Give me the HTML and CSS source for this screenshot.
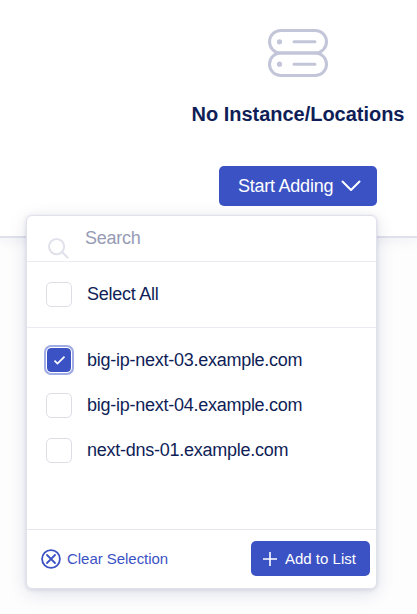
FILE: index.html
```html
<!DOCTYPE html>
<html lang="en">
<head>
<meta charset="utf-8">
<title>Instance/Locations</title>
<link rel="stylesheet" href="styles.css">
</head>
<body>
<main class="empty-card">
  <div class="empty-content">
    <svg class="server-icon" width="62" height="50" viewBox="0 0 62 50" fill="none" stroke="#c3c6d9" stroke-width="3" stroke-linecap="round">
      <rect x="2.500" y="2.500" width="57" height="22.500" rx="11.250"/>
      <rect x="2.500" y="25" width="57" height="22.500" rx="11.250"/>
      <path d="M27 13.800h21M27 36.200h21"/>
      <circle cx="12.500" cy="13.800" r="2.600" fill="#c3c6d9" stroke="none"/>
      <circle cx="12.500" cy="36.200" r="2.600" fill="#c3c6d9" stroke="none"/>
    </svg>
    <h1 class="title"><span>No Instance/Locations</span></h1>
  </div>
  <div class="dropdown">
    <button class="button start"><span>Start Adding</span>
      <svg width="20" height="12" viewBox="0 0 20 12" fill="none" stroke="#fff" stroke-width="2" stroke-linecap="round" stroke-linejoin="round"><path d="M1.500 1.500 10 10l8.500-8.500"/></svg>
    </button>
    <section class="menu">
      <label class="search">
        <svg width="21" height="21" viewBox="0 0 21 21" fill="none" stroke="#e0e1ea" stroke-width="2"><circle cx="8.600" cy="8.600" r="7.600"/><path d="m14 14 6.200 6.200"/></svg>
        <span>Search</span>
      </label>
      <div class="select-all row"><i class="box"></i><span class="all-label">Select All</span></div>
      <div class="options">
        <div class="row"><i class="box checked"><svg width="13" height="11" viewBox="0 0 13 11" fill="none" stroke="#fff" stroke-width="1.700"><path d="m1.500 5.600 3 3 7-7"/></svg></i><span class="host">big-ip-next-03.example.com</span></div>
        <div class="row"><i class="box"></i><span class="host">big-ip-next-04.example.com</span></div>
        <div class="row"><i class="box"></i><span class="host">next-dns-01.example.com</span></div>
      </div>
      <footer class="actions">
        <button class="clear">
          <svg width="20" height="20" viewBox="0 0 20 20" fill="none" stroke="#3b52c4" stroke-width="1.800" stroke-linecap="round"><circle cx="10" cy="10" r="8.900"/><path d="m6 6 8 8M14 6l-8 8"/></svg>
          <span>Clear Selection</span>
        </button>
        <button class="button add">
          <svg width="14" height="14" viewBox="0 0 14 14" fill="none" stroke="#fff" stroke-width="1.600"><path d="M7 0v14M0 7h14"/></svg>
          <span>Add to List</span>
        </button>
      </footer>
    </section>
  </div>
</main>
</body>
</html>
```
FILE: styles.css
```css
* { box-sizing: border-box; }
body {
  margin: 0;
  height: 614px;
  overflow: hidden;
  background: #fdfdfe;
  color: #0f1e57;
  font-family: "Liberation Sans", Arial, sans-serif;
  white-space: nowrap;
}
button { padding: 0; border: 0; background: none; font-family: inherit; }
svg { display: block; flex: none; }
.empty-card {
  height: 238px;
  padding-top: 28px;
  background: #fff;
  border-bottom: 2px solid #dfe1ea;
  box-shadow: 0 3px 12px rgba(15, 30, 87, .06);
}
.empty-content {
  width: 214px;
  margin-left: 191px;
  display: flex;
  flex-direction: column;
  align-items: center;
}
.title { margin: 24px 0 0; font-size: 20px; line-height: 24px; letter-spacing: -.02px; }
.dropdown { position: relative; width: 158px; margin: 40px 0 0 219px; }
.button {
  display: flex;
  align-items: center;
  border-radius: 5px;
  background: #3b52c4;
  color: #fff;
}
.start { width: 158px; height: 40px; padding-left: 19px; gap: 8px; font-size: 18px; letter-spacing: -.24px; }
.menu {
  position: absolute;
  top: 49px;
  right: 0;
  width: 351px;
  height: 374px;
  display: flex;
  flex-direction: column;
  border: 1px solid #e0e1eb;
  border-radius: 6px;
  background: #fff;
  box-shadow: 0 4px 18px rgba(15, 30, 87, .13), 0 1px 4px rgba(15, 30, 87, .12);
}
.search {
  height: 46px;
  display: flex;
  padding: 0 0 0 21px;
  gap: 16px;
  border-bottom: 1px solid #ebebf1;
  color: #969bb5;
  font-size: 18px;
  line-height: 44px;
  letter-spacing: -.24px;
}
.search svg { margin-top: 22px; }
.row { display: flex; align-items: center; gap: 15px; padding-left: 19px; font-size: 18px; letter-spacing: -.26px; }
.select-all { height: 66px; border-bottom: 1px solid #ebebf1; }
.box {
  width: 26px;
  height: 25px;
  flex: none;
  display: flex;
  align-items: center;
  justify-content: center;
  border: 1px solid #dcdde7;
  border-radius: 5px;
  background: #fff;
}
.box.checked {
  height: 26px;
  border-color: #fff;
  background: #3b52c4;
  background-clip: padding-box;
  box-shadow: 0 0 0 2px #a0ace3;
}
.options { flex: 1; padding-top: 10px; }
.options .row { height: 45px; }
.options .row:first-child { height: 44px; margin-bottom: 1px; }
.actions {
  height: 59px;
  display: flex;
  align-items: center;
  justify-content: space-between;
  padding: 0 6px 1px 14px;
  border-top: 1px solid #e5e6f1;
}
.clear { display: flex; align-items: center; gap: 6px; color: #3b52c4; font-size: 15px; letter-spacing: -.04px; }
.add { width: 119px; height: 35px; padding-left: 12px; gap: 8px; font-size: 15px; }
```
